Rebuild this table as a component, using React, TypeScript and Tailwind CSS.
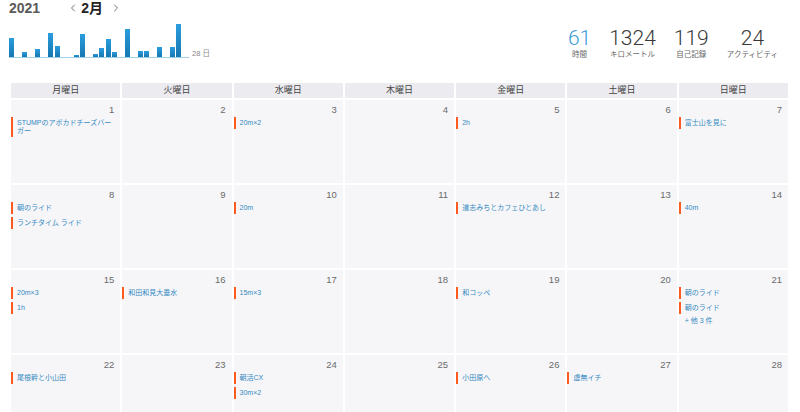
import { ChevronLeft, ChevronRight } from "lucide-react";

const bars: [number, number][] = [
  [9, 38], [22, 52], [35, 49], [48, 33], [55, 46], [74, 55], [80, 34], [93, 54], [99, 48],
  [106, 39], [112, 52], [125, 29], [138, 51], [144, 51], [157, 47], [170, 47], [176, 24],
];

const stats = [
  { value: "61", label: "時間", blue: true },
  { value: "1324", label: "キロメートル" },
  { value: "119", label: "自己記録" },
  { value: "24", label: "アクティビティ" },
];

const weekdays = ["月曜日", "火曜日", "水曜日", "木曜日", "金曜日", "土曜日", "日曜日"];

const events: Record<number, string[]> = {
  1: ["STUMPのアボカドチーズバーガー"],
  3: ["20m×2"],
  5: ["2h"],
  7: ["富士山を見に"],
  8: ["朝のライド", "ランチタイム ライド"],
  10: ["20m"],
  12: ["道志みちとカフェひとあし"],
  14: ["40m"],
  15: ["20m×3", "1h"],
  16: ["和田和見大垂水"],
  17: ["15m×3"],
  19: ["和コッペ"],
  21: ["朝のライド", "朝のライド"],
  22: ["尾根幹と小山田"],
  24: ["朝活CX", "30m×2"],
  26: ["小田原へ"],
  27: ["虚無イチ"],
};

const more: Record<number, string> = { 21: "+ 他 3 件" };

function Chart() {
  return (
    <svg width="215" height="44" className="block mt-[2px]">
      <defs>
        <linearGradient id="bar" x1="0" y1="0" x2="0" y2="1">
          <stop offset="0" stopColor="#2b9ddf" />
          <stop offset="1" stopColor="#1577b1" />
        </linearGradient>
      </defs>
      {bars.map(([x, top]) => (
        <rect key={x} x={x} y={top - 18} width="5" height={57 - top} fill="url(#bar)" />
      ))}
      <line x1="9" y1="39.5" x2="189" y2="39.5" stroke="#9fd0ee" strokeWidth="1" />
      <text x="192" y="38" fontSize="7.5" fill="#888" fontFamily="'Liberation Sans', 'Noto Sans CJK JP', sans-serif">
        28 日
      </text>
    </svg>
  );
}

function DayCell({ day }: { day: number }) {
  const list = events[day] ?? [];
  return (
    <div className="bg-[#f6f6f9] h-[83px] flex flex-col">
      <div className="text-right pr-[6px] pt-[4px] text-[9.5px] leading-[12px] text-[#6a6a6a]">{day}</div>
      <div className="mt-[1px] flex flex-col gap-[3px]">
        {list.map((e, i) => (
          <div key={i} className="border-l-[2px] border-[#fc5a1e] pl-[4px] pr-[8px] py-[2px] text-[7px] leading-[8px] text-[#3589c0]">
            {e}
          </div>
        ))}
        {more[day] && <div className="pl-[6px] text-[7px] leading-[8px] text-[#3589c0]">{more[day]}</div>}
      </div>
    </div>
  );
}

export default function App() {
  return (
    <div
      className="w-[800px] h-[412px] overflow-hidden bg-white"
      style={{ fontFamily: "'Liberation Sans', 'Noto Sans CJK JP', sans-serif" }}
    >
      <div className="h-[83px] flex justify-between">
        <div className="w-[220px]">
          <div className="flex items-center h-[16px]">
            <span className="ml-[9px] text-[14px] leading-[16px] font-semibold text-[#5a5a5a]">2021</span>
            <ChevronLeft className="ml-[27px] w-[12px] h-[12px] text-[#444]" strokeWidth={1.5} />
            <span className="ml-[2px] text-[14px] leading-[16px] font-bold text-[#222]">2月</span>
            <ChevronRight className="ml-[7px] w-[12px] h-[12px] text-[#444]" strokeWidth={1.5} />
          </div>
          <Chart />
        </div>
        <div className="flex gap-[18px] pr-[22px] pt-[26px]">
          {stats.map((s) => (
            <div key={s.label} className="flex flex-col items-center">
              <span
                className={`text-[21px] leading-[24px] font-light ${s.blue ? "text-[#3a9ad9]" : "text-[#383838]"}`}
                style={{ fontFamily: "Roboto, sans-serif" }}
              >
                {s.value}
              </span>
              <span className="text-[7.5px] leading-[10px] text-[#666]">{s.label}</span>
            </div>
          ))}
        </div>
      </div>
      <div className="ml-[11px] w-[777px] grid grid-cols-7 gap-[2px]">
        {weekdays.map((w) => (
          <div key={w} className="bg-[#ebebf0] h-[15px] flex items-center justify-center text-[9px] text-[#444]">
            {w}
          </div>
        ))}
        {Array.from({ length: 28 }, (_, i) => (
          <DayCell key={i} day={i + 1} />
        ))}
      </div>
    </div>
  );
}
